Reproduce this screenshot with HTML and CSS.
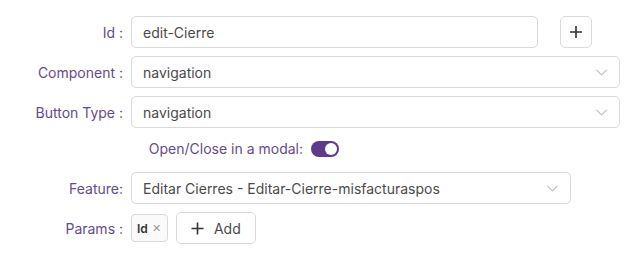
FILE: index.html
```html
<!DOCTYPE html>
<html lang="en">
<head>
    <meta charset="UTF-8">
    <title>Button settings</title>
    <link rel="stylesheet" href="styles.css">
</head>
<body>
    <form class="settings">
        <div class="row">
            <label class="label">Id :</label>
            <div class="field">
                <div class="input input-id">edit-Cierre</div>
                <button type="button" class="icon-btn" aria-label="Add">
                    <svg width="14" height="14" viewBox="0 0 14 14"><path d="M7 1v12M1 7h12" stroke="#333" stroke-width="1.6" fill="none"/></svg>
                </button>
            </div>
        </div>

        <div class="row">
            <label class="label">Component :</label>
            <div class="field">
                <div class="input select select-wide">
                    <span>navigation</span>
                    <svg class="chevron" width="11" height="7" viewBox="0 0 11 7"><path d="M0.5 0.8L5.5 6L10.5 0.8" stroke="#bfbfbf" stroke-width="1.1" fill="none"/></svg>
                </div>
            </div>
        </div>

        <div class="row">
            <label class="label">Button Type :</label>
            <div class="field">
                <div class="input select select-wide">
                    <span>navigation</span>
                    <svg class="chevron" width="11" height="7" viewBox="0 0 11 7"><path d="M0.5 0.8L5.5 6L10.5 0.8" stroke="#bfbfbf" stroke-width="1.1" fill="none"/></svg>
                </div>
            </div>
        </div>

        <div class="row row-toggle">
            <label class="label label-toggle">Open/Close in a modal:</label>
            <span class="toggle"><span class="knob"></span></span>
        </div>

        <div class="row">
            <label class="label">Feature:</label>
            <div class="field">
                <div class="input select select-feature">
                    <span>Editar Cierres - Editar-Cierre-misfacturaspos</span>
                    <svg class="chevron" width="11" height="7" viewBox="0 0 11 7"><path d="M0.5 0.8L5.5 6L10.5 0.8" stroke="#bfbfbf" stroke-width="1.1" fill="none"/></svg>
                </div>
            </div>
        </div>

        <div class="row">
            <label class="label">Params :</label>
            <div class="field">
                <span class="tag">Id <span class="tag-close">&#x2715;</span></span>
                <button type="button" class="add-btn">
                    <svg width="13" height="13" viewBox="0 0 13 13"><path d="M6.5 0.5v12M0.5 6.5h12" stroke="#333" stroke-width="1.6" fill="none"/></svg>
                    Add
                </button>
            </div>
        </div>
    </form>
</body>
</html>
```

FILE: styles.css
```css
body {
    margin: 0;
    font-family: Inter, "Noto Sans", sans-serif;
    font-size: 14px;
    color: #4a4a4a;
    background: #fff;
}

.settings {
    padding-top: 16px;
    display: flex;
    flex-direction: column;
    gap: 8px;
}

.row {
    display: flex;
    align-items: center;
    min-height: 32px;
}

.label {
    width: 123px;
    padding-right: 8px;
    text-align: right;
    color: #654b8c;
    flex-shrink: 0;
}

.field {
    display: flex;
    align-items: center;
    gap: 8px;
}

.input {
    box-sizing: border-box;
    height: 32px;
    border: 1px solid #d9d9d9;
    border-radius: 5px;
    padding: 0 11px;
    display: flex;
    align-items: center;
    color: #4a4a4a;
}

.input-id {
    width: 407px;
    margin-right: 14px;
}

.select {
    justify-content: space-between;
    padding-right: 12px;
}

.select-wide {
    width: 489px;
}

.select-feature {
    width: 440px;
}

.icon-btn {
    box-sizing: border-box;
    width: 32px;
    height: 32px;
    border: 1px solid #d9d9d9;
    border-radius: 5px;
    background: #fff;
    display: flex;
    align-items: center;
    justify-content: center;
    padding: 0;
}

.row-toggle {
    min-height: 16px;
    margin: 4px 0 7px;
}

.label-toggle {
    width: 303px;
}

.toggle {
    width: 28px;
    height: 16px;
    border-radius: 8px;
    background: #5e3b8a;
    position: relative;
}

.knob {
    position: absolute;
    top: 2px;
    right: 2px;
    width: 12px;
    height: 12px;
    border-radius: 50%;
    background: #fff;
}

.tag {
    box-sizing: border-box;
    height: 28px;
    padding: 0 6px 0 5px;
    border: 1px solid #d9d9d9;
    border-radius: 4px;
    background: #fafafa;
    display: flex;
    align-items: center;
    gap: 4px;
    font-size: 12px;
    font-weight: 600;
    color: #333;
}

.tag-close {
    font-size: 11px;
    font-weight: 400;
    color: #999;
}

.add-btn {
    box-sizing: border-box;
    height: 32px;
    width: 80px;
    border: 1px solid #d9d9d9;
    border-radius: 5px;
    background: #fff;
    font-family: inherit;
    font-size: 14px;
    color: #4a4a4a;
    display: flex;
    align-items: center;
    justify-content: center;
    gap: 10px;
}
```
